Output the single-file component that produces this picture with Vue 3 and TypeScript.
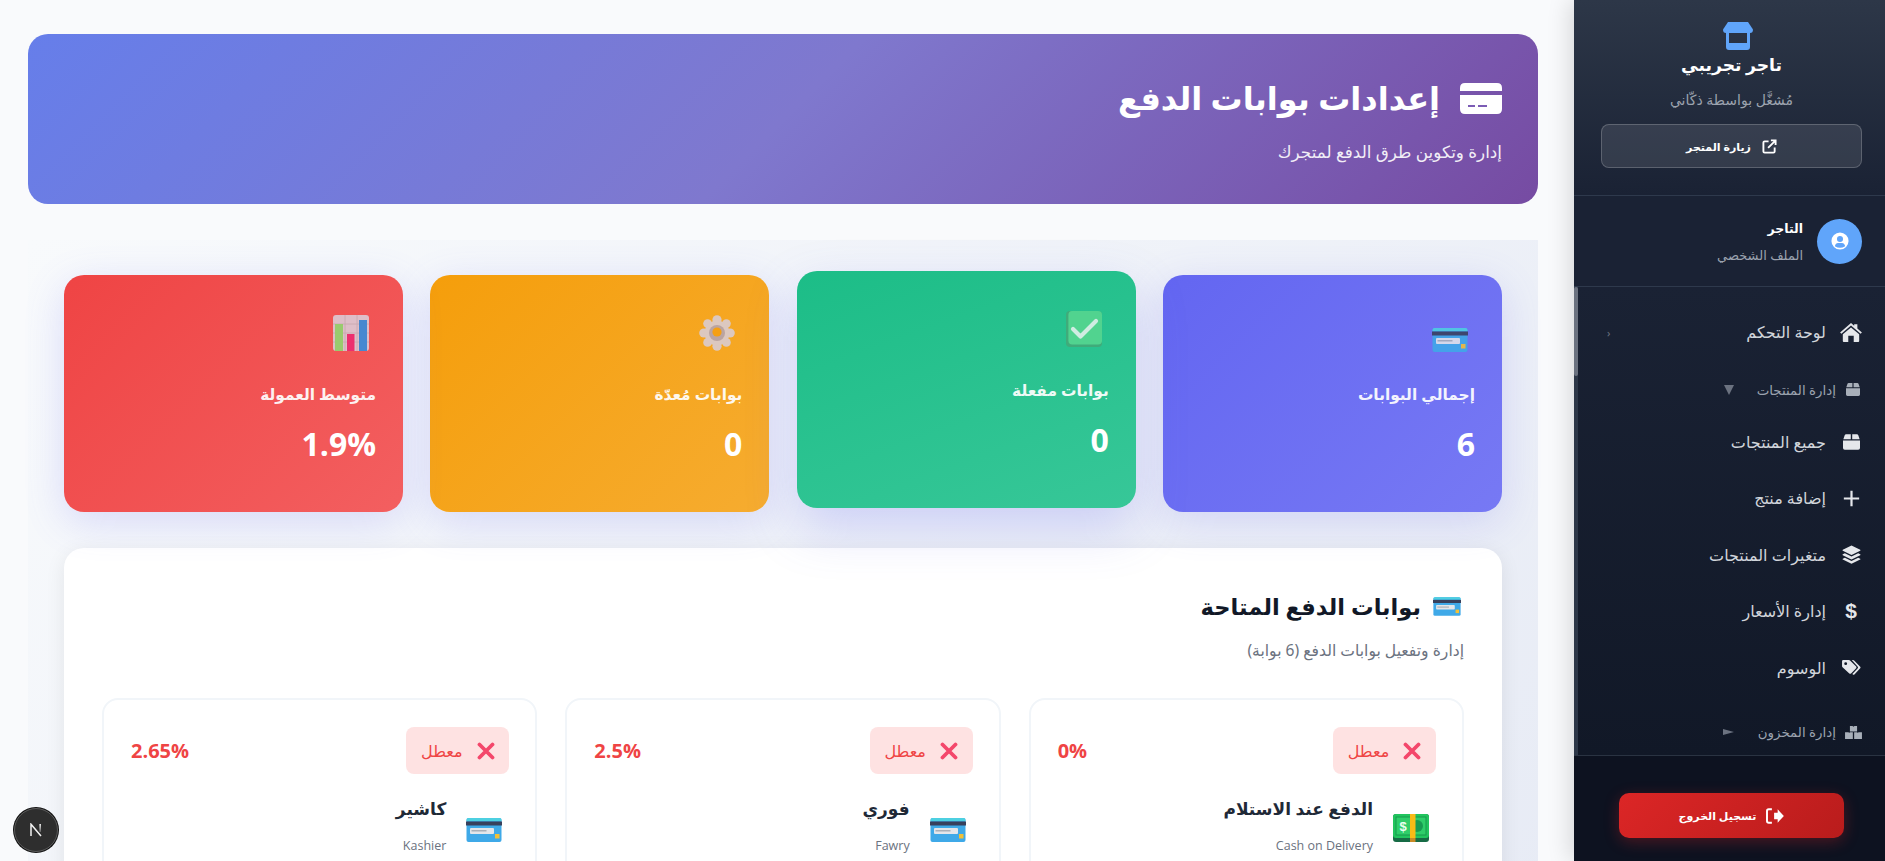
<script setup lang="ts">
interface NavRow { label: string; icon: string; kind: 'item' | 'section'; marker?: string }
const navRows: NavRow[] = [
  { label: 'لوحة التحكم', icon: 'home', kind: 'item', marker: 'chev' },
  { label: 'إدارة المنتجات', icon: 'box', kind: 'section', marker: 'down' },
  { label: 'جميع المنتجات', icon: 'box', kind: 'item' },
  { label: 'إضافة منتج', icon: 'plus', kind: 'item' },
  { label: 'متغيرات المنتجات', icon: 'layers', kind: 'item' },
  { label: 'إدارة الأسعار', icon: 'dollar', kind: 'item' },
  { label: 'الوسوم', icon: 'tags', kind: 'item' },
  { label: 'إدارة المخزون', icon: 'cubes', kind: 'section', marker: 'side' },
]
const stats = [
  { label: 'إجمالي البوابات', value: '6', tone: 'indigo', icon: 'card' },
  { label: 'بوابات مفعلة', value: '0', tone: 'green lifted', icon: 'check' },
  { label: 'بوابات مُعدّة', value: '0', tone: 'amber', icon: 'gear' },
  { label: 'متوسط العمولة', value: '1.9%', tone: 'red', icon: 'chart' },
]
const gateways = [
  { name: 'الدفع عند الاستلام', en: 'Cash on Delivery', fee: '0%', icon: 'money' },
  { name: 'فوري', en: 'Fawry', fee: '2.5%', icon: 'card' },
  { name: 'كاشير', en: 'Kashier', fee: '2.65%', icon: 'card' },
]
</script>

<template>
  <div class="page">
    <svg class="defs" width="0" height="0" aria-hidden="true">
      <symbol id="home" viewBox="0 0 24 22"><path d="M12 1 L15.5 4 V2.5 H19 V7.2 L24 11.6 L22.6 13 L12 3.9 L1.4 13 L0 11.6 Z M12 6 L21 13.6 V21 Q21 22 20 22 H15 V15 H9 V22 H4 Q3 22 3 21 V13.6 Z"/></symbol>
      <symbol id="box" viewBox="0 0 24 22"><path d="M4.5 0 H11 V7 H0.5 L2.4 1.4 Q2.9 0 4.5 0 Z M13 0 H19.5 Q21.1 0 21.6 1.4 L23.5 7 H13 Z M0 9 H24 V19.5 Q24 22 21.5 22 H2.5 Q0 22 0 19.5 Z"/></symbol>
      <symbol id="plus" viewBox="0 0 20 20"><path d="M8.7 1 H11.3 V8.7 H19 V11.3 H11.3 V19 H8.7 V11.3 H1 V8.7 H8.7 Z"/></symbol>
      <symbol id="layers" viewBox="0 0 24 24"><path d="M12 0.5 L23 6 Q23.8 6.6 23 7.2 L12 12.6 L1 7.2 Q0.2 6.6 1 6 Z M3.6 10.4 L12 14.6 L20.4 10.4 L23 11.7 Q23.8 12.2 23 12.8 L12 18.2 L1 12.8 Q0.2 12.2 1 11.7 Z M3.6 16 L12 20.2 L20.4 16 L23 17.3 Q23.8 17.8 23 18.4 L12 23.6 L1 18.4 Q0.2 17.8 1 17.3 Z"/></symbol>
      <symbol id="tags" viewBox="0 0 26 22"><path d="M1.6 0 H9.4 Q10.4 0 11 .7 L19.4 9.1 Q20.4 10.3 19.4 11.5 L12.4 18.5 Q11.2 19.5 10 18.5 L.7 9.9 Q0 9.3 0 8.3 V1.6 Q0 0 1.6 0 Z M5 3 A2 2 0 1 0 5 7 A2 2 0 1 0 5 3 Z M13.4 0 H15 Q16 0 16.6 .7 L25 9.3 Q26 10.4 25 11.5 L17 19.8 Q15.9 20.8 14.9 19.8 L14.2 19.1 L21.6 11.4 Q22.6 10.3 21.6 9.2 Z" fill-rule="evenodd"/></symbol>
      <symbol id="cubes" viewBox="0 0 26 20"><path d="M7.5 0 H11.5 L13 1 L14.5 0 H18.5 V8.5 H7.5 Z M0 9.5 H5 L6.5 10.5 L8 9.5 H12 V20 H0 Z M14 9.5 H18 L19.5 10.5 L21 9.5 H26 V20 H14 Z"/></symbol>
      <symbol id="pagecard" viewBox="0 0 42 31"><path d="M5 0 H37 Q42 0 42 5 V8 H0 V5 Q0 0 5 0 Z M0 12 H42 V26 Q42 31 37 31 H5 Q0 31 0 26 Z"/><path d="M8 22 H15 V24 H8 Z M18 22 H27 V24 H18 Z" fill="#7c5cb5"/></symbol>
      <symbol id="emoji-card" viewBox="0 0 36 24">
        <rect x="0.5" y="0" width="35" height="24" rx="2" fill="#3fa9e8"/>
        <path d="M0.5 3 V2 Q0.5 0 2.5 0 H33.5 Q35.5 0 35.5 2 V3 Z" fill="#4dd0e1"/>
        <rect x="0" y="3.5" width="36" height="4" fill="#37405c"/>
        <rect x="4" y="10" width="24" height="6" rx="1" fill="#e3e6ea"/>
        <rect x="5.5" y="12" width="15" height="1.5" fill="#aab0b8"/>
        <rect x="29" y="16" width="4.5" height="4.5" fill="#f2c037"/>
      </symbol>
      <symbol id="emoji-check" viewBox="0 0 36 36">
        <rect x="0" y="0" width="36" height="36" rx="4" fill="#44a878"/>
        <rect x="2.4" y="0" width="33.6" height="33.6" rx="4" fill="#57d690"/>
        <path d="M7 18 L14.5 25.5 L30 10" fill="none" stroke="#e8f2ee" stroke-width="4.2" stroke-linecap="round" stroke-linejoin="round"/>
      </symbol>
      <symbol id="emoji-gear" viewBox="0 0 36 36">
        <g fill="#d9cdd6">
          <circle cx="18" cy="4.8" r="4.6"/><circle cx="18" cy="31.2" r="4.6"/>
          <circle cx="4.8" cy="18" r="4.6"/><circle cx="31.2" cy="18" r="4.6"/>
          <circle cx="8.6" cy="8.6" r="4.4"/><circle cx="27.4" cy="8.6" r="4.4"/>
          <circle cx="8.6" cy="27.4" r="4.4"/><circle cx="27.4" cy="27.4" r="4.4"/>
          <circle cx="18" cy="18" r="12.5"/>
        </g>
        <circle cx="18" cy="18" r="8" fill="#b3a4b3"/>
        <circle cx="18" cy="17" r="4.6" fill="#f59f12"/>
      </symbol>
      <symbol id="emoji-chart" viewBox="0 0 36 36">
        <rect x="0" y="0" width="36" height="36" rx="3" fill="#dccdd8"/>
        <path d="M12 0 V36 M24 0 V36 M0 9 H36 M0 18 H36 M0 27 H36" stroke="#c2b2bd" stroke-width=".8"/>
        <rect x="2" y="9" width="8" height="27" fill="#8edb72"/>
        <rect x="14" y="19" width="7.5" height="17" fill="#ec2a72"/>
        <rect x="26" y="5" width="8" height="31" fill="#2f90e2"/>
      </symbol>
    </svg>

    <aside class="sidebar">
      <header class="brand">
        <svg class="store" viewBox="0 0 30 28" fill="#60a5fa"><path d="M5 0 H25 L30 7.5 Q30 11 27 11 H3 Q0 11 0 7.5 Z"/><path d="M3 10 H27 V25 Q27 28 24 28 H6 Q3 28 3 25 Z M6 11 V21 H24 V11 Z" fill-rule="evenodd"/></svg>
        <h2 class="brand-name">تاجر تجريبي</h2>
        <p class="brand-sub">مُشغَّل بواسطة ذكّاني</p>
        <button class="visit">
          <svg viewBox="0 0 16 16" fill="none" stroke="#fff" stroke-width="2"><path d="M7 2.5 H2.8 Q1.5 2.5 1.5 3.8 V13.2 Q1.5 14.5 2.8 14.5 H12.2 Q13.5 14.5 13.5 13.2 V9"/><path d="M6.5 9.5 L14 2 M9.5 1.5 H14.5 V6.5"/></svg>
          <span>زيارة المتجر</span>
        </button>
      </header>
      <div class="user">
        <div class="avatar"><svg viewBox="0 0 16 16"><circle cx="8" cy="8" r="7.6" fill="#fff"/><circle cx="8" cy="6.2" r="2.7" fill="#60a5fa"/><path d="M3.4 12.6 Q4.2 9.7 6.4 9.8 H9.6 Q11.8 9.7 12.6 12.6 Q8 15.6 3.4 12.6 Z" fill="#60a5fa"/></svg></div>
        <div class="user-text"><strong>التاجر</strong><span>الملف الشخصي</span></div>
      </div>
      <nav class="nav">
        <div v-for="row in navRows" :key="row.label" class="nav-row" :class="row.kind">
          <span class="nav-icon" :class="'ni-' + row.icon">
            <span v-if="row.icon === 'dollar'" class="dollar">$</span>
            <svg v-else><use :href="'#' + row.icon" /></svg>
          </span>
          <span class="nav-label">{{ row.label }}</span>
          <span v-if="row.marker === 'chev'" class="chev">‹</span>
          <span v-if="row.marker === 'down'" class="tri-down"></span>
          <span v-if="row.marker === 'side'" class="tri-side"></span>
        </div>
      </nav>
      <footer class="side-foot">
        <button class="logout">
          <svg viewBox="0 0 20 18" fill="#fff"><path d="M9 5.4 L13 5.4 V1.5 L20 9 L13 16.5 V12.6 H9 Z"/><path d="M6.5 1.5 H3 Q1 1.5 1 3.5 V14.5 Q1 16.5 3 16.5 H6.5" fill="none" stroke="#fff" stroke-width="2.2"/></svg>
          <span>تسجيل الخروج</span>
        </button>
      </footer>
    </aside>

    <main class="main">
      <section class="banner">
        <h1><svg viewBox="0 0 42 31" fill="#fff"><use href="#pagecard" /></svg>إعدادات بوابات الدفع</h1>
        <p>إدارة وتكوين طرق الدفع لمتجرك</p>
      </section>

      <section class="workspace">
        <div class="stats">
          <article v-for="s in stats" :key="s.label" class="stat" :class="s.tone">
            <svg class="stat-icon" :class="s.icon"><use :href="'#emoji-' + s.icon" /></svg>
            <h3>{{ s.label }}</h3>
            <div class="stat-value">{{ s.value }}</div>
          </article>
        </div>

        <section class="panel">
          <h2 class="panel-title"><svg><use href="#emoji-card" /></svg>بوابات الدفع المتاحة</h2>
          <p class="panel-sub">إدارة وتفعيل بوابات الدفع (6 بوابة)</p>
          <div class="gateways">
            <article v-for="g in gateways" :key="g.en" class="gateway">
              <div class="gateway-top">
                <span class="badge">
                  <svg viewBox="0 0 18 18"><path d="M2.5 2.5 L15.5 15.5 M15.5 2.5 L2.5 15.5" stroke="#f4476b" stroke-width="3.8" stroke-linecap="round"/></svg>
                  معطل
                </span>
                <span class="fee">{{ g.fee }}</span>
              </div>
              <div class="gateway-info">
                <svg v-if="g.icon === 'money'" class="gateway-icon money" viewBox="0 0 36 28">
                  <rect x="0" y="0" width="36" height="28" rx="3" fill="#176b45"/>
                  <rect x="0" y="0" width="36" height="24" rx="3" fill="#22c55e"/>
                  <rect x="3" y="3" width="30" height="18" fill="#2fce6a" stroke="#169a4c" stroke-width="1"/>
                  <circle cx="24" cy="12" r="6" fill="#199a52"/>
                  <rect x="17" y="0" width="5.5" height="24" fill="#f8bb16"/>
                  <rect x="17" y="24" width="5.5" height="4" fill="#c98a25"/>
                  <text x="10" y="17" font-size="13" font-weight="700" text-anchor="middle" fill="#eafff2" font-family="'Liberation Sans', sans-serif">$</text>
                </svg>
                <svg v-else class="gateway-icon card"><use href="#emoji-card" /></svg>
                <div class="gateway-text">
                  <h4>{{ g.name }}</h4>
                  <span>{{ g.en }}</span>
                </div>
              </div>
            </article>
          </div>
        </section>
      </section>
    </main>

    <div class="dev-badge" aria-label="Next.js">
      <svg viewBox="0 0 14 14" fill="none">
        <defs><linearGradient id="nfade" x1="0" y1="0" x2="0" y2="1"><stop offset="0" stop-color="#fff"/><stop offset="1" stop-color="#fff" stop-opacity=".25"/></linearGradient></defs>
        <path d="M2 13 V1.2 L12 13" stroke="#f2f2f2" stroke-width="1.5"/>
        <rect x="10.4" y="1" width="1.5" height="8" fill="url(#nfade)"/>
      </svg>
    </div>
  </div>
</template>

<style>
html, body { margin: 0; height: 100%; overflow: hidden; }
</style>

<style scoped>
* { box-sizing: border-box; }
.page {
  direction: rtl;
  display: flex;
  width: 100%;
  height: 861px;
  overflow: hidden;
  background: #f9fafc;
  font-family: "Noto Sans", "Open Sans", "DejaVu Sans", sans-serif;
}
.defs { position: absolute; }

/* sidebar */
.sidebar {
  flex: 0 0 311px;
  height: 861px;
  display: flex;
  flex-direction: column;
  color: #fff;
  background: #1a2234;
  position: relative;
  z-index: 2;
  box-shadow: -4px 0 22px rgba(0, 0, 0, .14);
}
.brand {
  height: 196px;
  flex: none;
  display: flex;
  flex-direction: column;
  align-items: center;
  padding: 22px 23px 0 27px;
  background: linear-gradient(180deg, #2d3748, #1a2234);
  border-bottom: 1px solid #2e394c;
}
.store { width: 30px; height: 28px; margin-right: -13px; flex: none; }
.brand-name { margin: 0; font-size: 17.2px; line-height: 30px; font-weight: 700; }
.brand-sub { margin: 10px 0 0; font-size: 14px; line-height: 20px; color: #9ca3af; }
.visit {
  margin-top: 14px;
  width: 261px;
  height: 44px;
  display: flex;
  align-items: center;
  justify-content: center;
  gap: 11px;
  color: #fff;
  font: 700 11px "Noto Sans", "Open Sans", "DejaVu Sans", sans-serif;
  background: rgba(255, 255, 255, .1);
  border: 1px solid rgba(255, 255, 255, .2);
  border-radius: 8px;
}
.visit svg { width: 15px; height: 15px; }
.user {
  height: 91px;
  flex: none;
  display: flex;
  align-items: center;
  gap: 14px;
  padding: 0 23px 0 27px;
  border-bottom: 1px solid #2e394c;
  background: #1a2234;
}
.avatar {
  width: 45px;
  height: 45px;
  border-radius: 50%;
  background: #60a5fa;
  display: flex;
  align-items: center;
  justify-content: center;
}
.avatar svg { width: 18px; height: 18px; }
.user-text { display: flex; flex-direction: column; gap: 7px; }
.user-text strong { font-size: 12.5px; line-height: 20px; }
.user-text span { font-size: 13px; line-height: 18px; color: #9ca3af; }
.nav {
  height: 468px;
  flex: none;
  padding: 17px 23px 0 4px;
  background: linear-gradient(180deg, #1a2234, #111827);
  border-left: 4px solid #2d3748;
  position: relative;
}
.nav::before {
  content: "";
  position: absolute;
  left: -4px;
  top: 0;
  width: 4px;
  height: 89px;
  border-radius: 2px;
  background: #6b7280;
}
.nav-row { height: 56.5px; display: flex; align-items: center; color: #d1d5db; }
.nav-icon { width: 22px; height: 22px; flex: none; display: flex; align-items: center; justify-content: center; }
.nav-icon svg { width: 22px; height: 20px; fill: #e5e7eb; }
.ni-box svg { width: 17px; height: 16px; }
.ni-plus svg { width: 17px; height: 17px; }
.ni-layers svg { width: 19px; height: 19px; }
.ni-tags svg { width: 19px; height: 16px; }
.dollar { font: 700 21px "Liberation Sans", sans-serif; color: #e5e7eb; }
.nav-label { margin-right: 14px; font-size: 16px; line-height: 22px; }
.nav-row.section { height: 48px; margin-top: 5px; color: #9ca3af; }
.nav-row.section:last-child { margin-top: 12px; }
.nav-row.section .nav-label { font-size: 13.4px; margin-right: 0; }
.nav-row.section .nav-icon { width: 26px; justify-content: flex-start; }
.nav-row.section .nav-icon svg { width: 14px; height: 13px; margin-right: 2px; fill: #a8afb9; }
.nav-row.section .ni-cubes svg { width: 17px; height: 13px; margin-right: 0; }
.chev { margin-right: auto; margin-left: 25px; font-size: 11px; color: #6b7280; }
.tri-down {
  position: absolute;
  left: 146px;
  width: 0;
  height: 0;
  border-left: 5.5px solid transparent;
  border-right: 5.5px solid transparent;
  border-top: 10px solid #6b7280;
}
.tri-side {
  position: absolute;
  left: 145px;
  width: 0;
  height: 0;
  border-top: 3px solid transparent;
  border-bottom: 3px solid transparent;
  border-left: 11px solid #6b7280;
}
.side-foot {
  flex: 1;
  display: flex;
  justify-content: center;
  align-items: flex-start;
  padding: 37px 0 0 4px;
  background: #0d1220;
  border-top: 1px solid #2a3342;
}
.logout {
  width: 225px;
  height: 45px;
  border: 0;
  border-radius: 10px;
  color: #fff;
  display: flex;
  align-items: center;
  justify-content: center;
  gap: 10px;
  font: 700 11px "Noto Sans", "Open Sans", "DejaVu Sans", sans-serif;
  background: linear-gradient(135deg, #dc2626, #b91c1c);
  box-shadow: 0 4px 15px rgba(220, 38, 38, .3);
}
.logout svg { width: 18px; height: 16px; }

/* main */
.main {
  flex: 1;
  min-width: 0;
  height: 861px;
  padding: 34px 36px 0 28px;
  background: #f9fafc;
  overflow: hidden;
}
.banner {
  height: 170px;
  padding: 0 36px;
  border-radius: 20px;
  color: #fff;
  background: linear-gradient(135deg, #667eea 0%, #7f78ce 50%, #764ba2 100%);
  display: flex;
  flex-direction: column;
  justify-content: center;
}
.banner h1 { margin: 0; display: flex; align-items: center; gap: 20px; font-size: 32px; line-height: 50px; font-weight: 700; }
.banner h1 svg { width: 42px; height: 31px; }
.banner p { margin: 16px 0 0; font-size: 16.8px; line-height: 26px; opacity: .9; }
.workspace {
  margin-top: 36px;
  height: 700px;
  padding: 35px 36px 0;
  background: linear-gradient(135deg, #f8fafc 0%, #e7ebf5 100%);
}
.stats { display: grid; grid-template-columns: repeat(4, 1fr); gap: 27.3px; }
.stat {
  height: 237px;
  padding: 40px 27px 0;
  border-radius: 20px;
  color: #fff;
  box-shadow: 0 10px 40px rgba(99, 102, 241, .2);
}
.stat.indigo { background: linear-gradient(135deg, #6366f1, #7779f4); }
.stat.green { background: linear-gradient(160deg, #1cbd87, #37c798); }
.stat.amber { background: linear-gradient(135deg, #f59e0b, #f6ac30); }
.stat.red { background: linear-gradient(135deg, #ef4444, #f35f60); }
.stat.lifted { transform: translateY(-4px); box-shadow: 0 20px 50px rgba(99, 102, 241, .25); }
.stat-icon { display: block; width: 36px; height: 36px; margin: 0 7px 0 0; opacity: .88; }
.stat-icon.card { height: 24px; margin-top: 13px; margin-bottom: -1px; }
.stat h3 { margin: 29px 0 0; font-size: 15.4px; line-height: 30px; font-weight: 600; opacity: .92; }
.stat-value { margin-top: 12px; font-family: "Open Sans", sans-serif; font-size: 32px; line-height: 44px; font-weight: 700; }
.panel {
  margin-top: 36px;
  height: 500px;
  padding: 36px 38px;
  background: #fff;
  border-radius: 20px;
  box-shadow: 0 4px 20px rgba(0, 0, 0, .08);
}
.panel-title { margin: 0; display: flex; align-items: center; gap: 12px; height: 44px; font-size: 22.6px; font-weight: 700; color: #111827; }
.panel-title svg { width: 28px; height: 19px; margin-right: 3px; }
.panel-sub { margin: 11px 0 0; font-size: 15.6px; line-height: 22px; color: #6b7280; }
.gateways { margin-top: 37px; display: grid; grid-template-columns: repeat(3, 1fr); gap: 28px; }
.gateway { height: 300px; padding: 27px 26px 0; border: 2px solid #f1f5f9; border-radius: 16px; }
.gateway-top { display: flex; align-items: center; justify-content: space-between; }
.badge {
  height: 47px;
  width: 103px;
  display: flex;
  align-items: center;
  justify-content: center;
  gap: 14px;
  border-radius: 8px;
  background: #fee2e2;
  color: #ef4444;
  font-size: 16px;
}
.badge svg { width: 18px; height: 18px; }
.fee { font-family: "Open Sans", sans-serif; font-size: 20px; font-weight: 700; color: #ef4444; direction: ltr; margin-left: 1px; }
.gateway-info { display: flex; align-items: flex-start; gap: 20px; margin-top: 20px; padding-right: 7px; }
.gateway-icon { width: 36px; height: 28px; margin-top: 20px; flex: none; }
.gateway-icon.card { height: 24px; margin-top: 24px; }
.gateway-text h4 { margin: 0; font-size: 17px; line-height: 30px; font-weight: 700; color: #1f2937; }
.gateway-text span { display: block; margin-top: 13px; font-family: "Open Sans", sans-serif; font-size: 12.5px; line-height: 18px; color: #6b7280; direction: rtl; }

.dev-badge {
  position: fixed;
  left: 14px;
  bottom: 9px;
  width: 44px;
  height: 44px;
  border-radius: 50%;
  background: #2e2e2e;
  border: 1px solid #5a5a5a;
  box-shadow: 0 0 0 1px #111;
  display: flex;
  align-items: center;
  justify-content: center;
}
.dev-badge svg { width: 14px; height: 14px; }
</style>
